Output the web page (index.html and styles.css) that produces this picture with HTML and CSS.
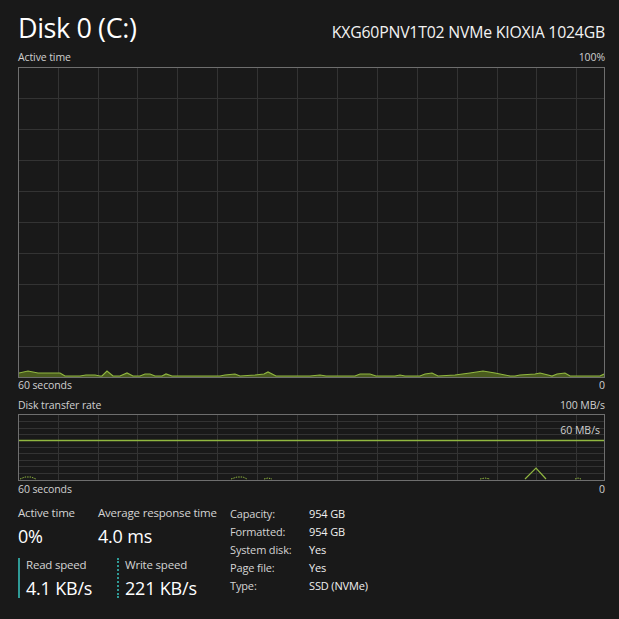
FILE: index.html
```html
<!DOCTYPE html>
<html>
<head>
<meta charset="utf-8">
<link rel="stylesheet" href="styles.css">
</head>
<body>
<div class="page">
  <div class="header">
    <div class="title">Disk 0 (C:)</div>
    <div class="model">KXG60PNV1T02 NVMe KIOXIA 1024GB</div>
  </div>

  <div class="axis axis-top"><span>Active time</span><span>100%</span></div>
  <div class="graph graph-active">
    <svg viewBox="0 0 585 309" preserveAspectRatio="none">
      <g class="grid">
        <line x1="39.5" y1="0" x2="39.5" y2="309"/><line x1="79.5" y1="0" x2="79.5" y2="309"/>
        <line x1="118.5" y1="0" x2="118.5" y2="309"/><line x1="158.5" y1="0" x2="158.5" y2="309"/>
        <line x1="198.5" y1="0" x2="198.5" y2="309"/><line x1="238.5" y1="0" x2="238.5" y2="309"/>
        <line x1="278.5" y1="0" x2="278.5" y2="309"/><line x1="318.5" y1="0" x2="318.5" y2="309"/>
        <line x1="358.5" y1="0" x2="358.5" y2="309"/><line x1="398.5" y1="0" x2="398.5" y2="309"/>
        <line x1="438.5" y1="0" x2="438.5" y2="309"/><line x1="478.5" y1="0" x2="478.5" y2="309"/>
        <line x1="517.5" y1="0" x2="517.5" y2="309"/><line x1="557.5" y1="0" x2="557.5" y2="309"/>
        <line x1="0" y1="30.5" x2="585" y2="30.5"/><line x1="0" y1="61.5" x2="585" y2="61.5"/>
        <line x1="0" y1="92.5" x2="585" y2="92.5"/><line x1="0" y1="123.5" x2="585" y2="123.5"/>
        <line x1="0" y1="154.5" x2="585" y2="154.5"/><line x1="0" y1="185.5" x2="585" y2="185.5"/>
        <line x1="0" y1="216.5" x2="585" y2="216.5"/><line x1="0" y1="247.5" x2="585" y2="247.5"/>
        <line x1="0" y1="278.5" x2="585" y2="278.5"/>
      </g>
      <path class="area" d="M0 309 L0 305 L9 303 L19 305 L41 305 L46 308 L61 308 L67 307 L76 307 L81 308 L83 308 L88 303 L94 308 L101 308 L108 305 L114 308 L121 308 L126 306 L131 306 L136 308 L143 308 L147 306 L153 308 L201 308 L206 307 L216 306 L221 308 L236 307 L245 306 L249 304 L257 308 L291 308 L301 307 L307 308 L336 308 L341 306 L351 306 L357 308 L376 308 L381 307 L386 308 L401 308 L406 306 L413 305 L419 308 L436 307 L451 305 L464 303 L476 305 L491 308 L496 308 L501 307 L516 306 L521 305 L529 307 L533 308 L538 306 L546 305 L551 308 L581 308 L585 306 L585 309 Z"/>
      <path class="line" d="M0 305 L9 303 L19 305 L41 305 L46 308 L61 308 L67 307 L76 307 L81 308 L83 308 L88 303 L94 308 L101 308 L108 305 L114 308 L121 308 L126 306 L131 306 L136 308 L143 308 L147 306 L153 308 L201 308 L206 307 L216 306 L221 308 L236 307 L245 306 L249 304 L257 308 L291 308 L301 307 L307 308 L336 308 L341 306 L351 306 L357 308 L376 308 L381 307 L386 308 L401 308 L406 306 L413 305 L419 308 L436 307 L451 305 L464 303 L476 305 L491 308 L496 308 L501 307 L516 306 L521 305 L529 307 L533 308 L538 306 L546 305 L551 308 L581 308 L585 306"/>
    </svg>
  </div>
  <div class="axis axis-bottom"><span>60 seconds</span><span>0</span></div>

  <div class="axis axis-top2"><span>Disk transfer rate</span><span>100 MB/s</span></div>
  <div class="graph graph-rate">
    <svg viewBox="0 0 585 65" preserveAspectRatio="none">
      <g class="grid">
        <line x1="39.5" y1="0" x2="39.5" y2="65"/><line x1="79.5" y1="0" x2="79.5" y2="65"/>
        <line x1="118.5" y1="0" x2="118.5" y2="65"/><line x1="158.5" y1="0" x2="158.5" y2="65"/>
        <line x1="198.5" y1="0" x2="198.5" y2="65"/><line x1="238.5" y1="0" x2="238.5" y2="65"/>
        <line x1="278.5" y1="0" x2="278.5" y2="65"/><line x1="318.5" y1="0" x2="318.5" y2="65"/>
        <line x1="358.5" y1="0" x2="358.5" y2="65"/><line x1="398.5" y1="0" x2="398.5" y2="65"/>
        <line x1="438.5" y1="0" x2="438.5" y2="65"/><line x1="478.5" y1="0" x2="478.5" y2="65"/>
        <line x1="517.5" y1="0" x2="517.5" y2="65"/><line x1="557.5" y1="0" x2="557.5" y2="65"/>
        <line x1="0" y1="6.5" x2="585" y2="6.5"/><line x1="0" y1="13.5" x2="585" y2="13.5"/>
        <line x1="0" y1="19.5" x2="585" y2="19.5"/><line x1="0" y1="32.5" x2="585" y2="32.5"/>
        <line x1="0" y1="38.5" x2="585" y2="38.5"/><line x1="0" y1="45.5" x2="585" y2="45.5"/>
        <line x1="0" y1="51.5" x2="585" y2="51.5"/><line x1="0" y1="58.5" x2="585" y2="58.5"/>
      </g>
      <line class="limit" x1="0" y1="25.5" x2="585" y2="25.5"/>
      <path class="dots" d="M1 64 L6 62 L12 62 L17 64 M212 64 L218 62 L224 62 L228 64 M245 64 L249 63 L253 64 M461 64 L466 63 L471 64 M556 64 L559 63 L562 64"/>
      <path class="line" d="M506 64 L517 53 L527 64"/>
    </svg>
    <span class="limit-label">60 MB/s</span>
  </div>
  <div class="axis axis-bottom2"><span>60 seconds</span><span>0</span></div>

  <div class="stats">
    <div class="left">
      <div class="row">
        <div class="stat stat-active">
          <div class="label">Active time</div>
          <div class="value">0%</div>
        </div>
        <div class="stat">
          <div class="label">Average response time</div>
          <div class="value">4.0 ms</div>
        </div>
      </div>
      <div class="row speeds">
        <div class="speed read">
          <div class="label">Read speed</div>
          <div class="value">4.1 KB/s</div>
        </div>
        <div class="speed write">
          <div class="label">Write speed</div>
          <div class="value">221 KB/s</div>
        </div>
      </div>
    </div>
    <div class="props">
      <span class="k">Capacity:</span><span class="v">954 GB</span>
      <span class="k">Formatted:</span><span class="v">954 GB</span>
      <span class="k">System disk:</span><span class="v">Yes</span>
      <span class="k">Page file:</span><span class="v">Yes</span>
      <span class="k">Type:</span><span class="v">SSD (NVMe)</span>
    </div>
  </div>
</div>
</body>
</html>
```

FILE: styles.css
```css
html, body {
  margin: 0;
  padding: 0;
  background: #191919;
}
body {
  width: 619px;
  height: 619px;
  overflow: hidden;
  font-family: "Open Sans", "Noto Sans", sans-serif;
  color: #ffffff;
}
.page {
  padding: 0 14px 0 18px;
}
.header {
  display: flex;
  justify-content: space-between;
  align-items: baseline;
  height: 50px;
}
.title {
  font-size: 27px;
  line-height: 36px;
  padding-top: 10px;
  letter-spacing: -0.4px;
  color: #fff;
}
.model {
  font-size: 15.8px;
  line-height: 20px;
  letter-spacing: -0.2px;
  color: #f2f2f2;
}
.axis {
  display: flex;
  justify-content: space-between;
  font-size: 10.5px;
  line-height: 14px;
  color: #d0d0d0;
  letter-spacing: -0.1px;
}
.axis-top { height: 17px; }
.axis-bottom { height: 20px; margin-top: 0; }
.axis-top2 { height: 16px; }
.axis-bottom2 { height: 20px; margin-top: 1px; }
.graph {
  position: relative;
  border: 1px solid #6e6e6e;
}
.graph svg {
  display: block;
  width: 100%;
  height: 100%;
}
.graph-active { height: 309px; }
.graph-rate { height: 65px; }
.grid line {
  stroke: #333333;
  stroke-width: 1;
}
.area {
  fill: #4a5c1e;
  stroke: none;
}
.line {
  fill: none;
  stroke: #90b640;
  stroke-width: 1.2;
}
.limit {
  stroke: #90b640;
  stroke-width: 1.4;
}
.dots {
  fill: none;
  stroke: #90b640;
  stroke-width: 1;
  stroke-dasharray: 1.5 1;
}
.limit-label {
  position: absolute;
  right: 4px;
  top: 8px;
  font-size: 10.5px;
  line-height: 14px;
  color: #d0d0d0;
}
.stats {
  display: flex;
  padding-top: 3px;
}
.left {
  width: 212px;
}
.row {
  display: flex;
}
.label {
  font-size: 11.5px;
  line-height: 16px;
  color: #d4d4d4;
  letter-spacing: -0.2px;
}
.value {
  font-size: 18px;
  line-height: 24px;
  margin-top: 3px;
  color: #fff;
  letter-spacing: -0.2px;
}
.stat-active {
  width: 80px;
}
.speeds {
  margin-top: 10px;
}
.speed {
  padding-left: 6px;
  height: 40px;
}
.speed .label {
  line-height: 14px;
}
.speed .value {
  margin-top: 4px;
}
.read {
  width: 91px;
  border-left: 2px solid #2f9a96;
}
.write {
  border-left: 2px dotted #2f9a96;
}
.props {
  display: grid;
  grid-template-columns: 79px auto;
  grid-auto-rows: 18px;
  font-size: 11px;
  line-height: 18px;
  color: #d4d4d4;
  letter-spacing: -0.15px;
  padding-top: 0;
}
.props .v {
  color: #f0f0f0;
}
```
